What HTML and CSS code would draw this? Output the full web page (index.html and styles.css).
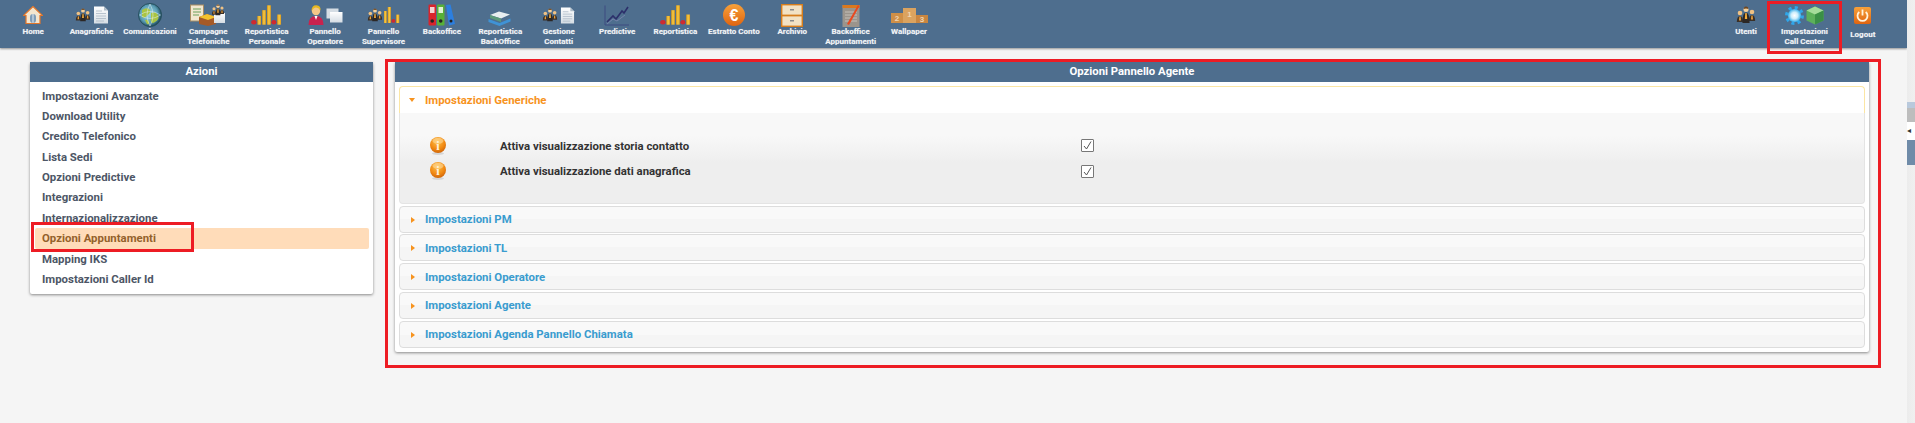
FILE: index.html
```html
<!DOCTYPE html>
<html lang="it">
<head>
    <meta charset="UTF-8">
    <meta name="viewport" content="width=device-width, initial-scale=1.0">
    <title>Impostazioni Call Center</title>
    <link rel="stylesheet" href="styles.css">
</head>
<body>

    <!-- shared icon parts -->
    <svg class="icon-defs" aria-hidden="true">
        <defs>
            <linearGradient id="gold" x1="0" x2="1" y1="0" y2="0">
                <stop offset="0" stop-color="#d0901a"/>
                <stop offset="0.5" stop-color="#f9cc44"/>
                <stop offset="1" stop-color="#dc9a1e"/>
            </linearGradient>
            <linearGradient id="orange" x1="0" x2="0" y1="0" y2="1">
                <stop offset="0" stop-color="#f7a13a"/>
                <stop offset="1" stop-color="#df6410"/>
            </linearGradient>
            <linearGradient id="sheet" x1="0" x2="0" y1="0" y2="1">
                <stop offset="0" stop-color="#ffffff"/>
                <stop offset="1" stop-color="#d5dde4"/>
            </linearGradient>
            <radialGradient id="globe" cx="0.45" cy="0.45" r="0.55">
                <stop offset="0" stop-color="#a4dcea"/>
                <stop offset="0.7" stop-color="#5a9db4"/>
                <stop offset="1" stop-color="#1f4a5c"/>
            </radialGradient>
            <radialGradient id="gear" cx="0.5" cy="0.5" r="0.5">
                <stop offset="0" stop-color="#ffffff"/>
                <stop offset="0.5" stop-color="#cdeefc"/>
                <stop offset="1" stop-color="#35ace8"/>
            </radialGradient>
            <radialGradient id="ball" cx="0.45" cy="0.3" r="0.75">
                <stop offset="0" stop-color="#fcc04f"/>
                <stop offset="0.6" stop-color="#f28a12"/>
                <stop offset="1" stop-color="#c95f08"/>
            </radialGradient>
            <symbol id="people" viewBox="0 0 20 18">
                <circle cx="4" cy="7" r="2.3" fill="#f0c284"/>
                <path d="M0.800 16Q1 10 4 10Q7 10 7.200 16Z" fill="#3a3028"/>
                <path d="M3.400 10.500h1.200l0.400 4h-2z" fill="#eda038"/>
                <circle cx="16" cy="6" r="2.300" fill="#f0c284"/>
                <path d="M12.800 15Q13 9 16 9Q19 9 19.200 15Z" fill="#3a3028"/>
                <path d="M15.400 9.500h1.200l0.400 4h-2z" fill="#eda038"/>
                <circle cx="10" cy="3.400" r="2.500" fill="#f6d09a"/>
                <path d="M7.600 3Q8 0.400 10 0.600Q12.400 0.600 12.400 3Q10 1.800 7.600 3Z" fill="#6b4622"/>
                <path d="M6.400 17Q6.600 6.600 10 6.600Q13.400 6.600 13.600 17Z" fill="#2c2724"/>
                <path d="M9.300 7h1.400l0.500 6h-2.400z" fill="#f3ab3c"/>
            </symbol>
            <symbol id="doc" viewBox="0 0 16 18">
                <path d="M1 0.500h10l4 4v13H1z" fill="url(#sheet)"/>
                <path d="M11 0.500l4 4h-4z" fill="#aebcc8"/>
                <path d="M3 5h6M3 7.500h10M3 10h10M3 12.500h10M3 15h8" stroke="#a9b7c4" stroke-width="0.800"/>
            </symbol>
            <symbol id="bars" viewBox="0 0 32 20">
                <ellipse cx="3" cy="17.400" rx="2.800" ry="2.300" fill="#cf2a30"/>
                <rect x="6.500" y="11" width="3.800" height="9" fill="url(#gold)"/>
                <rect x="11.500" y="5" width="3.800" height="15" fill="url(#gold)"/>
                <rect x="16.500" y="0" width="4" height="20" fill="url(#gold)"/>
                <ellipse cx="23.600" cy="17.400" rx="2.600" ry="2.300" fill="#cf2a30"/>
                <rect x="27" y="9.500" width="4" height="10.500" fill="url(#gold)"/>
            </symbol>
            <symbol id="info" viewBox="0 0 18 18">
                <ellipse cx="9" cy="16.500" rx="6" ry="1.500" fill="#d5d5d5"/>
                <circle cx="9" cy="8" r="8" fill="url(#ball)"/>
                <ellipse cx="9" cy="3.800" rx="5.500" ry="3" fill="#ffe0a6" opacity="0.550"/>
                <text x="9" y="12.600" text-anchor="middle" class="info-letter">i</text>
            </symbol>
        </defs>
    </svg>

    <div class="page">
        <div class="app">

            <header class="topbar">
                <nav class="nav-group">
                    <a class="nav-item">
                        <span class="nav-icon">
                            <svg width="20" height="18" viewBox="0 0 20 18">
                                <path d="M10 0.500L0.500 9.500h2.500v8h14v-8h2.500z" fill="#f3e6cf" stroke="#e2762a" stroke-width="1.200"/>
                                <path d="M3 17h14v1H3z" fill="#e2762a"/>
                                <rect x="7" y="8" width="6" height="9" rx="3" fill="#7f9db8"/>
                                <path d="M10 8v9" stroke="#e6edf2"/>
                            </svg>
                        </span>
                        <span class="nav-label">Home</span>
                    </a>
                    <a class="nav-item">
                        <span class="nav-icon">
                            <svg width="16" height="14"><use href="#people"/></svg>
                            <svg width="16" height="18"><use href="#doc"/></svg>
                        </span>
                        <span class="nav-label">Anagrafiche</span>
                    </a>
                    <a class="nav-item">
                        <span class="nav-icon">
                            <svg width="24" height="24" viewBox="0 0 24 24">
                                <circle cx="12" cy="12" r="11.500" fill="url(#globe)" stroke="#27505f" stroke-width="1"/>
                                <path d="M4 7q4-3 7-1t-1 6-6 2zM13 10q5-2 7 2t-3 7-4-4zM7 17q3-1 4 2t-2 2z" fill="#a9c443"/>
                                <path d="M1.500 12q10.500-7 21 0M1.500 12q10.500 7 21 0M12 1q-6 11 0 22M12 1q6 11 0 22" fill="none" stroke="#e8f3f6" stroke-width="0.500"/>
                            </svg>
                        </span>
                        <span class="nav-label">Comunicazioni</span>
                    </a>
                    <a class="nav-item">
                        <span class="nav-icon">
                            <svg width="36" height="22" viewBox="0 0 36 22">
                                <rect x="0.500" y="1" width="13" height="16" fill="#f2e7d0" stroke="#a98d63"/>
                                <path d="M3 5h8M3 8h8M3 11h6" stroke="#6aa05a"/>
                                <path d="M9 13l8-3 9 3v7l-8 2-9-2z" fill="#a55a28"/>
                                <path d="M9 13l8-3 9 3-8 3z" fill="#f4c22e"/>
                                <rect x="24" y="9" width="11" height="10" fill="url(#sheet)"/>
                                <svg x="21" y="0" width="14" height="12"><use href="#people"/></svg>
                            </svg>
                        </span>
                        <span class="nav-label">Campagne Telefoniche</span>
                    </a>
                    <a class="nav-item">
                        <span class="nav-icon">
                            <svg width="31" height="20"><use href="#bars"/></svg>
                        </span>
                        <span class="nav-label">Reportistica Personale</span>
                    </a>
                    <a class="nav-item">
                        <span class="nav-icon">
                            <svg width="16" height="20" viewBox="0 0 16 20">
                                <path d="M0.500 20q0-9 7.500-9t7.500 9z" fill="#c9234e"/>
                                <circle cx="8" cy="6" r="4.200" fill="#f3c888"/>
                                <path d="M3.500 6q0-6 5-5.800 4.500 0.300 4 5.300-2-3-4.500-3t-4.500 3.500z" fill="#e8b820"/>
                                <path d="M6.500 11l1.500 4 1.500-4z" fill="#fff"/>
                            </svg>
                            <svg width="17" height="15" viewBox="0 0 17 15">
                                <rect x="0.500" y="0.500" width="12" height="10" fill="#d5dde4"/>
                                <rect x="4" y="4" width="12.500" height="10.500" fill="url(#sheet)"/>
                            </svg>
                        </span>
                        <span class="nav-label">Pannello Operatore</span>
                    </a>
                    <a class="nav-item">
                        <span class="nav-icon">
                            <svg width="16" height="14"><use href="#people"/></svg>
                            <svg class="icon-tight" width="17" height="16" viewBox="13 0 19 20"><use href="#bars" width="32" height="20"/></svg>
                        </span>
                        <span class="nav-label">Pannello Supervisore</span>
                    </a>
                    <a class="nav-item">
                        <span class="nav-icon">
                            <svg width="27" height="22" viewBox="0 0 27 22">
                                <rect x="0.500" y="0.500" width="7.500" height="21" rx="1" fill="#d8242c"/>
                                <rect x="9" y="0.500" width="7.500" height="21" rx="1" fill="#58b038"/>
                                <path d="M18 1l4.500-0.500 4.500 19.500-6 1.500z" fill="#2c7fe0"/>
                                <rect x="2" y="3" width="4.500" height="6" fill="#f4d4d4"/>
                                <rect x="10.500" y="3" width="4.500" height="6" fill="#dff2d4"/>
                                <circle cx="4.200" cy="17" r="1.800" fill="#222"/>
                                <circle cx="12.700" cy="17" r="1.800" fill="#222"/>
                                <circle cx="23" cy="17" r="1.500" fill="#222"/>
                            </svg>
                        </span>
                        <span class="nav-label">Backoffice</span>
                    </a>
                    <a class="nav-item">
                        <span class="nav-icon nav-icon-low">
                            <svg width="24" height="15" viewBox="0 0 24 15">
                                <path d="M2 4l9-3.500 11 3-9 4z" fill="#e8eef0"/>
                                <path d="M2 4v3l11 4v-3.500z" fill="#5c9a7a"/>
                                <path d="M0.500 8l11 4 11-4.500v3l-11 4.500-11-4z" fill="#3f93d6"/>
                            </svg>
                        </span>
                        <span class="nav-label">Reportistica BackOffice</span>
                    </a>
                    <a class="nav-item">
                        <span class="nav-icon">
                            <svg width="16" height="14"><use href="#people"/></svg>
                            <svg width="15" height="17"><use href="#doc"/></svg>
                        </span>
                        <span class="nav-label">Gestione Contatti</span>
                    </a>
                    <a class="nav-item">
                        <span class="nav-icon">
                            <svg width="26" height="21" viewBox="0 0 26 21">
                                <path d="M1 0.500v19.500h24" fill="none" stroke="#3d4a80" stroke-width="1"/>
                                <path d="M3 17l6-6 3 3 6-8 2 2 4-6" fill="none" stroke="#2c2f6a" stroke-width="1.600"/>
                                <path d="M3 19l6-5 4 2 8-6" fill="none" stroke="#7d88b0" stroke-width="0.800"/>
                            </svg>
                        </span>
                        <span class="nav-label">Predictive</span>
                    </a>
                    <a class="nav-item">
                        <span class="nav-icon">
                            <svg width="31" height="20"><use href="#bars"/></svg>
                        </span>
                        <span class="nav-label">Reportistica</span>
                    </a>
                    <a class="nav-item">
                        <span class="nav-icon">
                            <svg width="22" height="22" viewBox="0 0 22 22">
                                <circle cx="11" cy="11" r="11" fill="url(#orange)"/>
                                <text x="11" y="16.500" text-anchor="middle" class="euro-letter">€</text>
                            </svg>
                        </span>
                        <span class="nav-label">Estratto Conto</span>
                    </a>
                    <a class="nav-item">
                        <span class="nav-icon">
                            <svg width="22" height="23" viewBox="0 0 22 23">
                                <rect x="0.500" y="0.500" width="21" height="22" fill="#f2e2c4" stroke="#d77e1c" stroke-width="1.800"/>
                                <path d="M1 11.500h20" stroke="#d77e1c" stroke-width="1.800"/>
                                <rect x="9" y="5" width="4" height="1.500" fill="#8a8a8a"/>
                                <rect x="9" y="16" width="4" height="1.500" fill="#8a8a8a"/>
                            </svg>
                        </span>
                        <span class="nav-label">Archivio</span>
                    </a>
                    <a class="nav-item">
                        <span class="nav-icon">
                            <svg width="18" height="23" viewBox="0 0 18 23">
                                <rect x="0.500" y="1" width="17" height="22" fill="#9b948c"/>
                                <rect x="0.500" y="1" width="17" height="3" fill="#d9791f"/>
                                <path d="M3 8h12M3 11h12M3 14h12M3 17h12" stroke="#cfcac4" stroke-width="0.800"/>
                                <path d="M5 20L16 1l1.500 1L7 21z" fill="#e8491f"/>
                            </svg>
                        </span>
                        <span class="nav-label">Backoffice Appuntamenti</span>
                    </a>
                    <a class="nav-item">
                        <span class="nav-icon">
                            <svg width="37" height="15" viewBox="0 0 37 15">
                                <rect x="0" y="5" width="13" height="10" fill="#cf8f47"/>
                                <rect x="12" y="0" width="13" height="15" fill="#dba35f"/>
                                <rect x="25" y="7" width="12" height="8" fill="#c98640"/>
                                <text x="6" y="13" text-anchor="middle" class="podium-letter">2</text>
                                <text x="18.500" y="9" text-anchor="middle" class="podium-letter">1</text>
                                <text x="31" y="14" text-anchor="middle" class="podium-letter">3</text>
                            </svg>
                        </span>
                        <span class="nav-label">Wallpaper</span>
                    </a>
                </nav>

                <nav class="nav-group nav-group-right">
                    <a class="nav-item">
                        <span class="nav-icon">
                            <svg width="22" height="18"><use href="#people"/></svg>
                        </span>
                        <span class="nav-label">Utenti</span>
                    </a>
                    <a class="nav-item">
                        <span class="nav-icon">
                            <svg width="19" height="19" viewBox="0 0 19 19">
                                <circle cx="9.500" cy="9.500" r="7.800" fill="none" stroke="#2fa6ea" stroke-width="3.400" stroke-dasharray="3 3.120"/>
                                <circle cx="9.500" cy="9.500" r="6.600" fill="url(#gear)"/>
                            </svg>
                            <svg width="18" height="19" viewBox="0 0 18 19">
                                <path d="M9 0.500l8.500 4v10L9 18.500 0.500 14.500v-10z" fill="#5cb05a"/>
                                <path d="M9 0.500l8.500 4L9 8.500 0.500 4.500z" fill="#a5dc9a"/>
                                <path d="M9 8.500v10l8.500-4v-10z" fill="#3a8f45"/>
                            </svg>
                        </span>
                        <span class="nav-label">Impostazioni Call Center</span>
                    </a>
                    <a class="nav-item nav-item-logout">
                        <span class="nav-icon">
                            <svg width="17" height="17" viewBox="0 0 17 17">
                                <rect width="17" height="17" rx="2" fill="url(#orange)"/>
                                <path d="M5.300 5a5 5 0 1 0 6.400 0" fill="none" stroke="#fff3dc" stroke-width="1.800"/>
                                <path d="M8.500 2.500v6" stroke="#fff3dc" stroke-width="1.800"/>
                            </svg>
                        </span>
                        <span class="nav-label">Logout</span>
                    </a>
                </nav>
            </header>

            <main class="content">
                <section class="panel side">
                    <h2 class="panel-title">Azioni</h2>
                    <ul class="side-list">
                        <li>Impostazioni Avanzate</li>
                        <li>Download Utility</li>
                        <li>Credito Telefonico</li>
                        <li>Lista Sedi</li>
                        <li>Opzioni Predictive</li>
                        <li>Integrazioni</li>
                        <li>Internazionalizzazione</li>
                        <li class="active">Opzioni Appuntamenti</li>
                        <li>Mapping IKS</li>
                        <li>Impostazioni Caller Id</li>
                    </ul>
                </section>

                <section class="panel main-panel">
                    <h2 class="panel-title">Opzioni Pannello Agente</h2>
                    <div class="accordion">
                        <div class="acc-head open"><span class="arrow-down"></span>Impostazioni Generiche</div>
                        <div class="acc-body">
                            <div class="option">
                                <svg class="option-info" width="18" height="18"><use href="#info"/></svg>
                                <span class="option-label">Attiva visualizzazione storia contatto</span>
                                <span class="check"><svg width="11" height="11" viewBox="0 0 11 11"><path d="M2 6l2.500 3L9 1.500" fill="none" stroke="#555" stroke-width="1"/></svg></span>
                            </div>
                            <div class="option">
                                <svg class="option-info" width="18" height="18"><use href="#info"/></svg>
                                <span class="option-label">Attiva visualizzazione dati anagrafica</span>
                                <span class="check"><svg width="11" height="11" viewBox="0 0 11 11"><path d="M2 6l2.500 3L9 1.500" fill="none" stroke="#555" stroke-width="1"/></svg></span>
                            </div>
                        </div>
                        <div class="acc-head"><span class="arrow-right"></span>Impostazioni PM</div>
                        <div class="acc-head"><span class="arrow-right"></span>Impostazioni TL</div>
                        <div class="acc-head"><span class="arrow-right"></span>Impostazioni Operatore</div>
                        <div class="acc-head"><span class="arrow-right"></span>Impostazioni Agente</div>
                        <div class="acc-head"><span class="arrow-right"></span>Impostazioni Agenda Pannello Chiamata</div>
                    </div>
                </section>
            </main>
        </div>

        <div class="scroll-strip">
            <div class="strip-head"></div>
            <div class="strip-thumb"></div>
            <div class="strip-arrow">◂</div>
            <div class="strip-blue"></div>
        </div>
    </div>

    <!-- red marks drawn over the screenshot -->
    <div class="mark mark-top"></div>
    <div class="mark mark-side"></div>
    <div class="mark mark-main"></div>

</body>
</html>
```

FILE: styles.css
```css
/* Reset */
* {
    margin: 0;
    padding: 0;
    box-sizing: border-box;
}

body {
    font-family: Roboto, 'Liberation Sans', sans-serif;
    background: #f5f5f5;
    height: 423px;
    overflow: hidden;
    color: #333;
}

.icon-defs {
    position: absolute;
    width: 0;
    height: 0;
}

.page {
    display: flex;
    height: 100%;
}

.app {
    width: 1907px;
}

/* Top bar */
.topbar {
    height: 48px;
    display: flex;
    justify-content: space-between;
    padding: 0 15px 0 4px;
    background: #4e6e8e;
    box-shadow: 0 1px 2px rgba(0, 0, 0, 0.4);
}

.nav-group {
    display: flex;
}

.nav-item {
    width: 58.4px;
    display: flex;
    flex-direction: column;
    align-items: center;
    text-align: center;
}

.nav-item-logout .nav-label {
    margin-top: 3px;
}

.nav-icon {
    height: 27px;
    display: flex;
    align-items: center;
    justify-content: center;
    gap: 2px;
    padding-top: 3px;
}

.nav-icon-low {
    padding-top: 9px;
}

.nav-label {
    font-size: 8px;
    font-weight: 700;
    line-height: 9.6px;
    color: #fff;
    opacity: 0.92;
    text-shadow: 0 0 1px rgba(255, 255, 255, 0.5);
}

.icon-tight {
    margin-left: -1px;
}

.info-letter {
    font-family: 'Liberation Serif', serif;
    font-size: 12px;
    font-weight: 700;
    fill: #fff3dc;
}

.euro-letter {
    font-family: 'Liberation Sans', sans-serif;
    font-size: 16px;
    font-weight: 700;
    fill: #fff;
}

.podium-letter {
    font-family: 'Liberation Sans', sans-serif;
    font-size: 8px;
    font-weight: 700;
    fill: #f0d6b4;
}

/* Panels */
.content {
    display: flex;
    align-items: flex-start;
    gap: 22px;
    padding: 14px 38px 0 30px;
}

.panel {
    background: #fff;
    border-radius: 2px;
    box-shadow: 0 1px 3px rgba(0, 0, 0, 0.45);
}

.side {
    width: 343px;
}

.main-panel {
    width: 1474px;
}

.panel-title {
    height: 20px;
    font-size: 11.3px;
    font-weight: 700;
    line-height: 20px;
    text-align: center;
    color: #fff;
    background: #4e6e8e;
}

.side-list {
    list-style: none;
    padding: 3.5px 4px 4.5px 5px;
}

.side-list li {
    height: 20.4px;
    padding-left: 7px;
    font-size: 11.4px;
    font-weight: 700;
    line-height: 20.4px;
    color: #4d5666;
    border-radius: 2px;
}

.side-list .active {
    background: #ffdcb9;
    color: #93612b;
}

/* Accordion */
.accordion {
    padding: 4px;
}

.acc-head {
    height: 27px;
    margin-bottom: 1.75px;
    display: flex;
    align-items: center;
    padding-left: 25px;
    position: relative;
    font-size: 11.4px;
    font-weight: 700;
    color: #3a9ccf;
    background: linear-gradient(#f9f9f9 50%, #f5f5f5 50%);
    border: 1px solid #ddd;
    border-radius: 4px;
}

.acc-head:last-child {
    margin-bottom: 0;
}

.acc-head.open {
    margin-bottom: 0;
    color: #f7931e;
    background: #fff;
    border-color: #fbe6a4;
    border-bottom: none;
    border-radius: 4px 4px 0 0;
}

.arrow-right,
.arrow-down {
    position: absolute;
    width: 0;
    height: 0;
}

.arrow-right {
    left: 11px;
    top: 10px;
    border-left: 4px solid #f7931e;
    border-top: 3px solid transparent;
    border-bottom: 3px solid transparent;
}

.arrow-down {
    left: 9px;
    top: 11px;
    border-top: 4px solid #f7931e;
    border-left: 3px solid transparent;
    border-right: 3px solid transparent;
}

.acc-body {
    height: 91px;
    margin-bottom: 1.5px;
    padding-top: 20px;
    background: linear-gradient(#f8f8f8 25%, #eeeeee 55%);
    border: 1px solid #e4e4e4;
    border-top: none;
    border-radius: 0 0 4px 4px;
}

.option {
    height: 25.5px;
    display: flex;
    align-items: center;
    padding-left: 29px;
}

.option-info {
    flex: none;
}

.option-label {
    width: 581px;
    margin-left: 53px;
    font-size: 11.4px;
    font-weight: 700;
    color: #333;
}

.check {
    width: 13px;
    height: 13px;
    display: flex;
    align-items: center;
    justify-content: center;
    background: #fff;
    border: 1px solid #777;
    border-radius: 1px;
}

/* Right edge */
.scroll-strip {
    width: 8px;
    padding-top: 102px;
    background: linear-gradient(90deg, #ececec, #f0f0f0);
}

.strip-head {
    height: 6px;
    background: #b9c9dc;
}

.strip-thumb {
    height: 14px;
    background: #bdbdbd;
}

.strip-arrow {
    height: 18px;
    font-size: 8px;
    line-height: 18px;
    background: #fff;
    color: #333;
}

.strip-blue {
    height: 25px;
    background: #6f8ba8;
}

/* Red marks */
.mark {
    position: absolute;
    border: 3px solid #ed1c24;
}

.mark-top {
    left: 1767px;
    top: 1px;
    width: 75px;
    height: 53px;
}

.mark-side {
    left: 31px;
    top: 222px;
    width: 163px;
    height: 30px;
}

.mark-main {
    left: 385px;
    top: 59px;
    width: 1496px;
    height: 309px;
}
```
